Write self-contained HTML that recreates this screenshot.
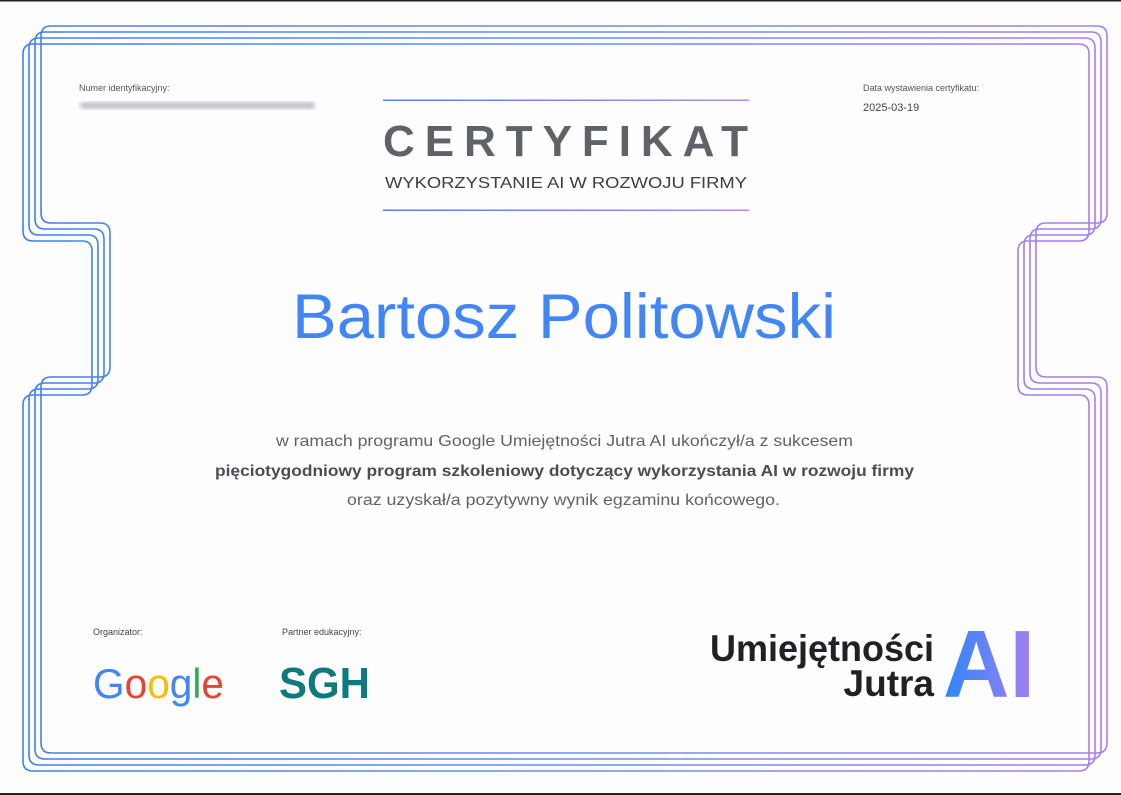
<!DOCTYPE html>
<html><head><meta charset="utf-8"><style>
html,body{margin:0;padding:0;background:#fff;}
svg{display:block;}
text{font-family:"Liberation Sans","DejaVu Sans",sans-serif;}
</style></head><body>
<svg id="s" width="1121" height="795" viewBox="0 0 1121 795" xmlns="http://www.w3.org/2000/svg">
<defs>
<linearGradient id="g" x1="0" y1="0" x2="1121" y2="0" gradientUnits="userSpaceOnUse">
<stop offset="0" stop-color="#3d7fef"/><stop offset="0.55" stop-color="#6d8df5"/><stop offset="1" stop-color="#a97df0"/></linearGradient>
<linearGradient id="gl" x1="383" y1="0" x2="749" y2="0" gradientUnits="userSpaceOnUse">
<stop offset="0" stop-color="#4a86ec"/><stop offset="1" stop-color="#b58ae8"/></linearGradient>
<linearGradient id="ai" x1="944" y1="0" x2="1034" y2="0" gradientUnits="userSpaceOnUse">
<stop offset="0" stop-color="#2e86f8"/><stop offset="1" stop-color="#a67ef3"/></linearGradient>
<filter id="bl"><feGaussianBlur stdDeviation="2"/></filter>
</defs>
<rect width="1121" height="795" fill="#fdfdfe"/>
<rect x="0" y="0" width="1121" height="1.5" fill="#222"/>
<rect x="0" y="793" width="1121" height="2" fill="#222"/>
<g id="frame" fill="none" stroke="url(#g)" stroke-width="1.6"></g>

<text x="79" y="91" font-size="9" fill="#555">Numer identyfikacyjny:</text>
<rect x="80" y="102" width="235" height="7" rx="3" fill="#bfc2c8" filter="url(#bl)"/>
<text x="863" y="91" font-size="9" fill="#555">Data wystawienia certyfikatu:</text>
<text x="863" y="111" font-size="11" fill="#444">2025-03-19</text>

<rect x="383" y="99.5" width="366" height="1.5" fill="url(#gl)"/>
<rect x="383" y="209.5" width="366" height="1.5" fill="url(#gl)"/>
<text x="383" y="156" font-size="44" font-weight="bold" fill="#5f6368" textLength="365" lengthAdjust="spacing">CERTYFIKAT</text>
<text x="385" y="188" font-size="16" fill="#3c4043" textLength="362" lengthAdjust="spacingAndGlyphs">WYKORZYSTANIE AI W ROZWOJU FIRMY</text>

<text x="292" y="338" font-size="63" fill="#4285f4" textLength="544" lengthAdjust="spacingAndGlyphs">Bartosz Politowski</text>

<text x="276" y="446" font-size="16" fill="#5f6368" textLength="577" lengthAdjust="spacingAndGlyphs">w ramach programu Google Umiejętności Jutra AI ukończył/a z sukcesem</text>
<text x="215" y="476" font-size="16" font-weight="bold" fill="#4a4d52" textLength="699" lengthAdjust="spacingAndGlyphs">pięciotygodniowy program szkoleniowy dotyczący wykorzystania AI w rozwoju firmy</text>
<text x="347" y="505" font-size="16" fill="#5f6368" textLength="433" lengthAdjust="spacingAndGlyphs">oraz uzyskał/a pozytywny wynik egzaminu końcowego.</text>

<text x="93" y="635" font-size="9" fill="#444">Organizator:</text>
<text x="282" y="635" font-size="9" fill="#444">Partner edukacyjny:</text>
<text x="93" y="698" font-size="42" textLength="131" lengthAdjust="spacingAndGlyphs"><tspan fill="#4285f4">G</tspan><tspan fill="#ea4335">o</tspan><tspan fill="#fbbc05">o</tspan><tspan fill="#4285f4">g</tspan><tspan fill="#34a853">l</tspan><tspan fill="#ea4335">e</tspan></text>
<text x="279" y="698" font-size="44" font-weight="bold" fill="#0d7a7c" textLength="91" lengthAdjust="spacingAndGlyphs">SGH</text>

<text x="934" y="661" font-size="37" font-weight="bold" fill="#202124" text-anchor="end" textLength="224" lengthAdjust="spacingAndGlyphs">Umiejętności</text>
<text x="934" y="696" font-size="37" font-weight="bold" fill="#202124" text-anchor="end">Jutra</text>
<text x="943" y="697" font-size="96" font-weight="bold" fill="url(#ai)" textLength="92" lengthAdjust="spacingAndGlyphs">AI</text>
</svg>
<script>
(function(){
var r=10,out='';
function P(L,T,R,B,n1,n2,dl,dr){
 var p=[[L,T],[R,T],[R,n1],[R-dr,n1],[R-dr,n2],[R,n2],[R,B],[L,B],[L,n2],[L+dl,n2],[L+dl,n1],[L,n1]];
 var d='';
 for(var i=0;i<p.length;i++){
  var a=p[(i+p.length-1)%p.length],b=p[i],c=p[(i+1)%p.length];
  var ux=Math.sign(b[0]-a[0]),uy=Math.sign(b[1]-a[1]),vx=Math.sign(c[0]-b[0]),vy=Math.sign(c[1]-b[1]);
  var s=[b[0]-ux*r,b[1]-uy*r],e=[b[0]+vx*r,b[1]+vy*r];
  d+=(i==0?'M':'L')+s[0]+' '+s[1]+' Q'+b[0]+' '+b[1]+' '+e[0]+' '+e[1]+' ';
 }
 return '<path d="'+d+'Z"/>';
}
for(var i=0;i<4;i++){
 var dx=-6*i,dy=6*i;
 out+=P(41+dx,26+dy,1107+dx,753+dy,223+dy,377+dy,69,71);
}
document.getElementById('frame').innerHTML=out;
})();
</script>
</body></html>
